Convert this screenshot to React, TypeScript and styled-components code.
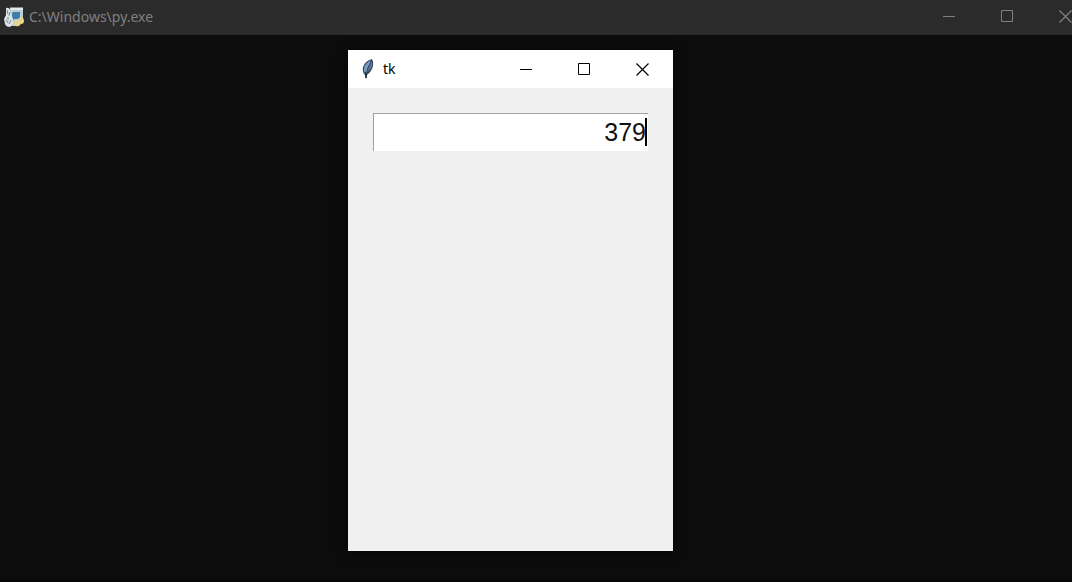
import React, { useState } from "react";
import styled, { createGlobalStyle } from "styled-components";

const GlobalStyle = createGlobalStyle`
  *, *::before, *::after { box-sizing: border-box; }
  body {
    margin: 0;
    background: #0c0c0c;
    font-family: "Noto Sans", "Open Sans", sans-serif;
  }
`;

const Desktop = styled.main`
  position: relative;
  min-height: 100vh;
  overflow: hidden;
  background: #0c0c0c;
  border-bottom: 2px solid #050505;
`;

const ConsoleBar = styled.header`
  display: flex;
  align-items: center;
  height: 35px;
  padding-left: 3px;
  padding-bottom: 2px;
  background: #2b2b2b;
  color: #808080;
`;

const Title = styled.h1<{ $gap: number }>`
  flex: 1;
  margin: 0 0 0 ${(p) => p.$gap}px;
  font-size: 14px;
  line-height: 20px;
  font-weight: 400;
  white-space: nowrap;
`;

const Controls = styled.div<{ $end: number }>`
  display: flex;
  align-self: stretch;
  flex: none;
  margin-right: ${(p) => p.$end}px;
`;

const ControlButton = styled.button`
  display: flex;
  align-items: center;
  justify-content: center;
  width: 58px;
  padding: 0;
  border: 0;
  background: transparent;
  color: inherit;
`;

const AppWindow = styled.section`
  position: absolute;
  top: 50px;
  left: 348px;
  display: flex;
  flex-direction: column;
  width: 325px;
  min-height: 501px;
  background: #f0f0f0;
  box-shadow: 0 2px 10px rgba(0, 0, 0, 0.6);
`;

const WindowBar = styled.header`
  display: flex;
  align-items: center;
  height: 38px;
  padding-left: 13px;
  background: #ffffff;
  color: #000000;
`;

const WindowBody = styled.div`
  padding: 25px;
`;

const EntryFrame = styled.label`
  position: relative;
  display: block;
`;

const Entry = styled.input`
  display: block;
  width: 100%;
  height: 38px;
  padding: 0 2px 0 4px;
  border: 0;
  border-top: 1px solid #a0a0a0;
  border-left: 1px solid #a0a0a0;
  border-radius: 0;
  outline: 0;
  background: #ffffff;
  color: #111111;
  caret-color: transparent;
  font-family: "Liberation Sans", Arial, sans-serif;
  font-size: 25px;
  text-align: right;
`;

const Caret = styled.span`
  position: absolute;
  top: 5px;
  right: 1px;
  width: 2px;
  height: 28px;
  background: #000000;
`;

const Icon = styled.svg`
  display: block;
  flex: none;
`;

function WindowControls({ end }: { end: number }) {
  return (
    <Controls $end={end}>
      <ControlButton type="button" aria-label="Minimize">
        <Icon width="13" height="13" viewBox="0 0 13 13">
          <path d="M0 6.5h12" stroke="currentColor" />
        </Icon>
      </ControlButton>
      <ControlButton type="button" aria-label="Maximize">
        <Icon width="13" height="13" viewBox="0 0 13 13" fill="none">
          <path d="M.5 .5h11v11H.5z" stroke="currentColor" />
        </Icon>
      </ControlButton>
      <ControlButton type="button" aria-label="Close">
        <Icon width="13" height="13" viewBox="0 0 13 13" fill="none">
          <path d="M.5 .5l12 12M12.5 .5l-12 12" stroke="currentColor" strokeWidth="1.2" />
        </Icon>
      </ControlButton>
    </Controls>
  );
}

function PythonLauncherIcon() {
  return (
    <Icon width="22" height="22" viewBox="0 0 22 22" aria-hidden="true">
      <path d="M7 2h13v14l-4 4H5z" fill="#b5cdd6" />
      <path d="M7 1.500h13v2.500H8z" fill="#e0ebed" />
      <path d="M10 6h7v5l-2 2h-4l-2 3V8z" fill="#3f7da6" />
      <path d="M17 11h2q2 1 2 4t-3 3h-2v2q-3 1-5-1v-3q1-2 3-2h3z" fill="#e6d588" />
      <path d="M3 2q3-1 4 2l2 6q2 4 1 8l-3 3q-4 0-5-3l-1-5 2-4z" fill="#dbe4e6" />
      <path d="M4 4l1 4M7 6l-1 4M3 14l2 3M8 14l-2 4M5 11v3" stroke="#6d8794" fill="none" />
    </Icon>
  );
}

function FeatherIcon() {
  return (
    <Icon width="14" height="22" viewBox="0 0 14 22" aria-hidden="true">
      <path d="M11 1q2 3 1 7-1 5-6 9l-1 4-1-4Q1 14 2 9q2-6 9-8z" fill="#34455d" />
      <path d="M10 2Q4 5 3 10q-1 3 1 5 2-6 6-13z" fill="#7597bd" />
      <path d="M11 3q1 4-1 7-2 3-4 4 2-6 5-11z" fill="#5877a0" />
      <path d="M5 16v4" stroke="#172334" strokeWidth="1.500" fill="none" />
      <path d="M9 4Q5 9 5 14" stroke="#a8c5df" strokeWidth=".6" fill="none" />
    </Icon>
  );
}

export default function App() {
  const [value, setValue] = useState("379");
  return (
    <>
      <GlobalStyle />
      <Desktop>
        <ConsoleBar>
          <PythonLauncherIcon />
          <Title $gap={4}>C:\Windows\py.exe</Title>
          <WindowControls end={-22} />
        </ConsoleBar>
        <AppWindow aria-label="tk">
          <WindowBar>
            <FeatherIcon />
            <Title as="h2" $gap={8}>tk</Title>
            <WindowControls end={2} />
          </WindowBar>
          <WindowBody>
            <EntryFrame>
              <Entry
                aria-label="Display"
                value={value}
                onChange={(e) => setValue(e.target.value)}
              />
              <Caret />
            </EntryFrame>
          </WindowBody>
        </AppWindow>
      </Desktop>
    </>
  );
}
